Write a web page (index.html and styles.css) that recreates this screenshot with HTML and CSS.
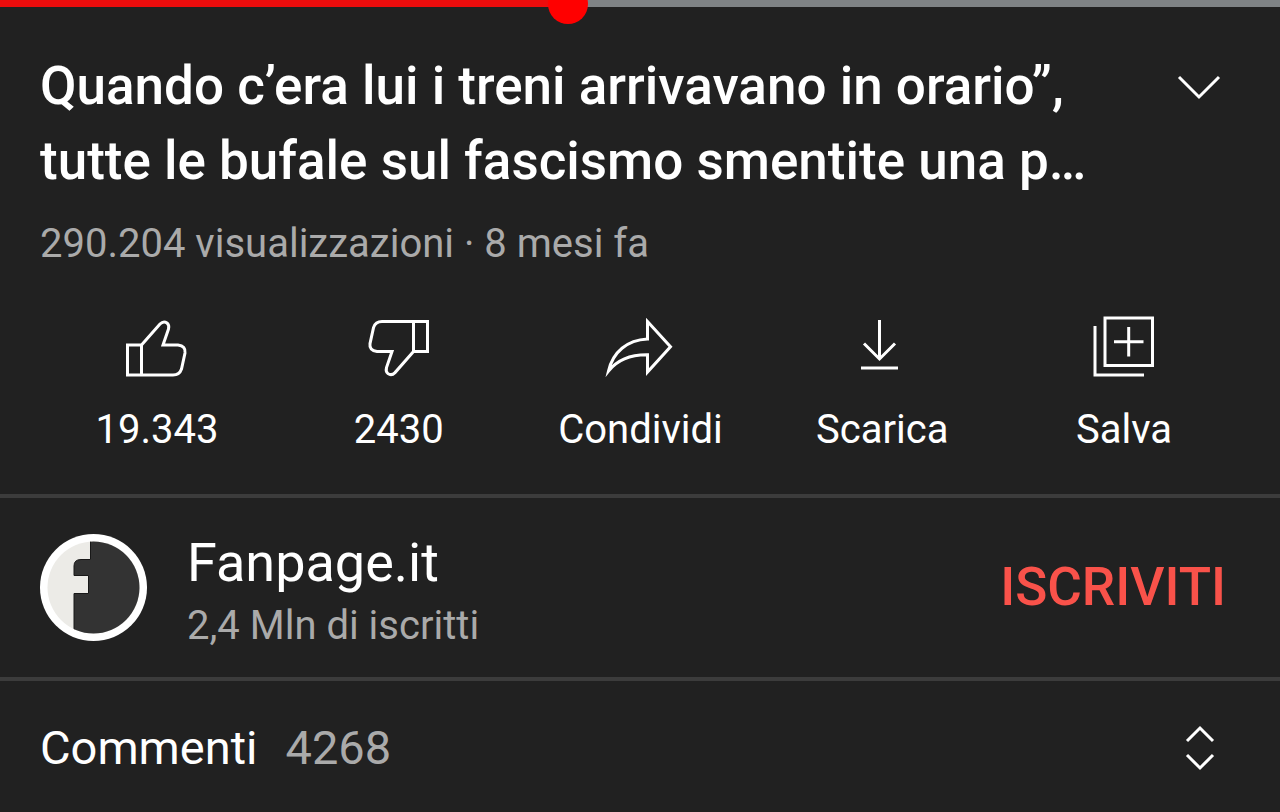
FILE: index.html
```html
<!DOCTYPE html>
<html lang="it">
<head>
    <meta charset="utf-8">
    <meta name="viewport" content="width=device-width, initial-scale=1">
    <title>Fanpage.it</title>
    <link rel="stylesheet" href="styles.css">
</head>
<body>
    <div class="progress">
        <div class="progress-played" style="width: 44.4%"><span class="progress-thumb"></span></div>
    </div>

    <main>
        <section class="video-info">
            <div class="title-row">
                <h1>Quando c’era lui i treni arrivavano in orario”,<br>tutte le bufale sul fascismo smentite una p…</h1>
                <button type="button" class="expand" aria-label="Mostra descrizione">
                    <svg width="44" height="28" viewBox="0 0 44 28"><path d="M2 3L22 23L42 3"/></svg>
                </button>
            </div>
            <p class="meta">290.204 visualizzazioni · 8 mesi fa</p>
        </section>

        <div class="actions">
            <button type="button">
                <svg width="72" height="72" viewBox="0 0 72 72"><path d="M20.5 33L39 12Q42.5 8.500 46 11Q48.500 13 47.500 17L42 33H57Q65 34 64 41L60.500 57Q58.500 63 52 63H6.500V33H20.500V63"/></svg>
                <span>19.343</span>
            </button>
            <button type="button">
                <svg width="72" height="72" viewBox="0 0 72 72"><path transform="rotate(180 35.5 36.3)" d="M20.5 33L39 12Q42.5 8.500 46 11Q48.500 13 47.500 17L42 33H57Q65 34 64 41L60.500 57Q58.500 63 52 63H6.500V33H20.500V63"/></svg>
                <span>2430</span>
            </button>
            <button type="button">
                <svg width="72" height="72" viewBox="0 0 72 72"><path stroke-miterlimit="8" d="M43.500 9.500L66.500 34.700L43.500 60V42.700C28 42.500 14 47 4.500 59C9 40 23 28 43.500 27Z"/></svg>
                <span>Condividi</span>
            </button>
            <button type="button">
                <svg width="72" height="72" viewBox="0 0 72 72"><path d="M33.500 8V46M18 31.500L33.500 47L49 31.500M15 56H52"/></svg>
                <span>Scarica</span>
            </button>
            <button type="button">
                <svg width="72" height="72" viewBox="0 0 72 72"><path d="M17 6H64.500V53.500H17ZM7 14V63H56M40.700 15V44.500M26 29.700H55.500"/></svg>
                <span>Salva</span>
            </button>
        </div>

        <section class="channel">
            <svg class="avatar" width="107" height="107" viewBox="0 0 107 107">
                <defs>
                    <clipPath id="disc"><circle cx="53.5" cy="53.5" r="46"/></clipPath>
                </defs>
                <circle cx="53.5" cy="53.5" r="53.5" fill="#fff"/>
                <g clip-path="url(#disc)">
                    <rect width="107" height="107" fill="#ecebe7"/>
                    <path d="M50.500 0V25.500H41Q34 25.500 34 32V41.500H48.500V59.500H34V107H107V0Z" fill="#333" stroke="#181818"/>
                </g>
            </svg>
            <div class="channel-text">
                <h2>Fanpage.it</h2>
                <p>2,4 Mln di iscritti</p>
            </div>
            <button type="button" class="subscribe">ISCRIVITI</button>
        </section>

        <section class="comments">
            <h2>Commenti</h2>
            <span class="count">4268</span>
            <button type="button" class="expand" aria-label="Apri commenti">
                <svg width="44" height="48" viewBox="0 0 44 48"><path d="M9 17L22 4L35 17M9 31L22 44L35 31"/></svg>
            </button>
        </section>
    </main>
</body>
</html>
```

FILE: styles.css
```css
* {
    box-sizing: border-box;
}
body {
    margin: 0;
    background-color: #212121;
    color: #fff;
    font-family: Roboto, "Liberation Sans", sans-serif;
    font-size: 40px;
    line-height: 48px;
}
h1, h2, p {
    margin: 0;
}
button {
    padding: 0;
    border: none;
    background: none;
    color: inherit;
    font: inherit;
    cursor: pointer;
}
svg {
    display: block;
    flex-shrink: 0;
}
button svg {
    fill: none;
    stroke: #fff;
    stroke-width: 3;
}

/* player progress */
.progress {
    height: 7px;
    background-color: #7f8385;
}
.progress-played {
    position: relative;
    height: 100%;
    background-color: #ec0c0c;
}
.progress-thumb {
    position: absolute;
    right: -20px;
    bottom: -17px;
    width: 40px;
    height: 40px;
    border-radius: 50%;
    background-color: #f00;
}

/* title and views */
.video-info {
    padding: 42px 59px 0 40px;
}
.title-row {
    display: flex;
    justify-content: space-between;
    align-items: flex-start;
}
h1 {
    font-size: 53px;
    font-weight: 500;
    line-height: 75px;
}
.title-row .expand {
    padding-top: 25px;
}
.meta {
    margin-top: 21px;
    color: #aaa;
}

/* buttons under the title */
.actions {
    display: grid;
    grid-template-columns: repeat(5, 1fr);
    padding: 44px 35px 40px 36px;
}
.actions button {
    display: flex;
    flex-direction: column;
    align-items: center;
    gap: 22px;
}

.channel {
    display: flex;
    align-items: center;
    padding: 26px 54px 27px 40px;
    border-top: 4px solid #3c3c3c;
    border-bottom: 4px solid #3c3c3c;
}
.channel-text {
    flex: 1;
    margin-left: 40px;
}
.channel h2 {
    font-size: 54px;
    font-weight: 400;
    line-height: 78px;
}
.channel p {
    color: #aaa;
}
.subscribe {
    color: #f9524a;
    font-size: 53px;
    font-weight: 500;
}

.comments {
    display: flex;
    align-items: center;
    padding: 36px 58px 32px 40px;
}
.comments h2 {
    font-size: 47px;
    font-weight: 400;
    line-height: 62px;
}
.count {
    margin-left: 28px;
    color: #aaa;
    font-size: 47px;
}
.comments .expand {
    margin-left: auto;
}
```
